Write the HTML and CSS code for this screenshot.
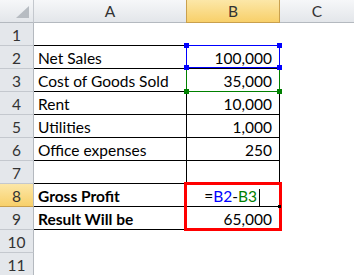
FILE: index.html
```html
<!DOCTYPE html>
<html lang="en">
<head>
    <meta charset="UTF-8">
    <title>Gross Profit</title>
    <link rel="stylesheet" href="styles.css">
</head>
<body>

    <div class="sheet">
        <div class="grid">
            <!-- header row -->
            <div class="hd corner">
                <svg width="34" height="22" viewBox="0 0 34 22"><polygon points="29,6 29,18 16,18" fill="#b7bcc2"/></svg>
            </div>
            <div class="hd">A</div>
            <div class="hd sel">B</div>
            <div class="hd">C</div>

            <div class="rh">1</div>
            <div class="c top"></div>
            <div class="c top"></div>
            <div class="c"></div>

            <div class="rh">2</div>
            <div class="c bx">Net Sales</div>
            <div class="c bx num">100,000</div>
            <div class="c"></div>

            <div class="rh">3</div>
            <div class="c bx">Cost of Goods Sold</div>
            <div class="c bx num">35,000</div>
            <div class="c"></div>

            <div class="rh">4</div>
            <div class="c bx">Rent</div>
            <div class="c bx num">10,000</div>
            <div class="c"></div>

            <div class="rh">5</div>
            <div class="c bx">Utilities</div>
            <div class="c bx num">1,000</div>
            <div class="c"></div>

            <div class="rh">6</div>
            <div class="c bx">Office expenses</div>
            <div class="c bx num">250</div>
            <div class="c"></div>

            <div class="rh">7</div>
            <div class="c bx"></div>
            <div class="c bx"></div>
            <div class="c"></div>

            <div class="rh sel">8</div>
            <div class="c bx b">Gross Profit</div>
            <div class="c bx num edit"><span>=</span><span class="ref1">B2</span><span>-</span><span class="ref2">B3</span><span class="caret"></span></div>
            <div class="c"></div>

            <div class="rh">9</div>
            <div class="c bx b">Result Will be</div>
            <div class="c bx num">65,000</div>
            <div class="c"></div>

            <div class="rh">10</div>
            <div class="c"></div>
            <div class="c"></div>
            <div class="c"></div>

            <div class="rh">11</div>
            <div class="c"></div>
            <div class="c"></div>
            <div class="c"></div>
        </div>

        <!-- reference highlights -->
        <div class="refbox blue"></div>
        <div class="refbox green"></div>
        <span class="handle blue-h" style="left: 184px; top: 43px;"></span>
        <span class="handle blue-h" style="left: 277px; top: 43px;"></span>
        <span class="handle green-h" style="left: 184px; top: 89px;"></span>
        <span class="handle green-h" style="left: 277px; top: 89px;"></span>
        <span class="handle blue-h" style="left: 184px; top: 65px;"></span>
        <span class="handle blue-h" style="left: 277px; top: 65px;"></span>

        <div class="redbox"></div>
        <span class="fill-dot"></span>
    </div>

</body>
</html>
```

FILE: styles.css
```css
body {
    margin: 0;
    background-color: #fff;
    font-family: "Lato", "Liberation Sans", sans-serif;
    font-size: 15.5px;
    color: #000;
}
.sheet { position: relative; width: 354px; height: 275px; overflow: hidden; }
.grid {
    display: grid;
    grid-template-columns: 34px 153px 93px 75px;
    grid-template-rows: 23px repeat(11, 23px);
}
.grid > div { box-sizing: border-box; white-space: nowrap; overflow: hidden; }

.hd {
    background: linear-gradient(#f6f7f9, #e3e6ea);
    border-right: 1px solid #c4c8ce;
    border-bottom: 1px solid #b4b9bf;
    text-align: center;
    line-height: 22px;
    color: #333;
}
.hd.corner { padding: 0; line-height: 0; }
.hd.sel {
    background: linear-gradient(#fce7a8, #f8d06a);
    border-left: 1px solid #c9a04e;
    border-right: 1px solid #c9a04e;
    border-bottom: 1px solid #c9a04e;
    margin-left: -1px;
}

.rh {
    background: #e4e7eb;
    border-right: 1px solid #b4b9bf;
    border-bottom: 1px solid #c4c8ce;
    text-align: center;
    line-height: 24px;
    color: #333;
}
.rh.sel { background: linear-gradient(#fce7a8, #f8d06a); border-bottom-color: #c9a04e; }

.c { line-height: 24px; padding-left: 4px; }
.c.top { border-bottom: 1px solid #000; }
.c.bx { border-bottom: 1px solid #000; border-right: 1px solid #000; }
.c.num { text-align: right; padding-right: 7px; }
.c.b { font-weight: bold; }

.edit { padding-right: 22px !important; position: relative; }
.ref1 { color: #0000ff; }
.ref2 { color: #008000; }
.caret {
    position: absolute;
    left: 72px;
    top: 5px;
    width: 1px;
    height: 17px;
    background: #000;
}

.refbox { position: absolute; box-sizing: border-box; }
.refbox.blue { left: 186px; top: 45px; width: 94px; height: 23px; border: 1px solid #0000ff; }
.refbox.green { left: 186px; top: 68px; width: 94px; height: 24px; border: 1px solid #008000; border-top: none; }
.handle { position: absolute; width: 5px; height: 5px; }
.blue-h { background: #0000ff; }
.green-h { background: #008000; }

.redbox {
    position: absolute;
    left: 184px;
    top: 182px;
    width: 98px;
    height: 49px;
    box-sizing: border-box;
    border: 3px solid #ff0000;
}
.fill-dot { position: absolute; left: 278px; top: 205px; width: 3px; height: 3px; background: #000; }
```
